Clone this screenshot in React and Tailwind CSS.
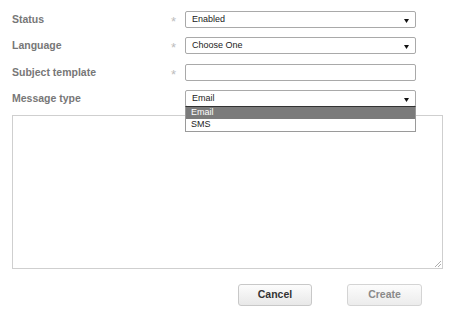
import React from 'react';

const Arrow = () => (
    <svg width="5" height="4" viewBox="0 0 5 4" className="absolute right-[6px] top-[7px]">
        <path d="M0 0 L5 0 L2.5 4 Z" fill="#111" />
    </svg>
);

const Star = ({ show }) => (
    <span className="w-[23px] h-[17px] text-center text-[13px] text-[#bdbdbd] leading-none pt-[4px]">{show ? '*' : ''}</span>
);

const Row = ({ label, required, children, className = '' }) => (
    <div className={`flex items-center ${className}`}>
        <label className="w-[150px] text-[10.5px] font-bold text-[#777]">{label}</label>
        <Star show={required} />
        {children}
    </div>
);

const SelectBox = ({ value, children }) => (
    <div className="relative w-[231px] h-[17px] border border-[#a9a9a9] rounded-[2px] bg-white">
        <span className="absolute left-[6px] top-[2px] text-[9px] text-[#222] leading-[11px]">{value}</span>
        <Arrow />
        {children}
    </div>
);

export default function App() {
    return (
        <div className="w-[474px] h-[319px] bg-white overflow-hidden" style={{ fontFamily: '"Liberation Sans", Arial, sans-serif' }}>
            <form className="px-3 pt-[11px]">
                <Row label="Status" required className="mb-[9px]">
                    <SelectBox value="Enabled" />
                </Row>
                <Row label="Language" required className="mb-[10px]">
                    <SelectBox value="Choose One" />
                </Row>
                <Row label="Subject template" required className="mb-[9px]">
                    <div className="w-[231px] h-[17px] border border-[#a9a9a9] rounded-[2px] bg-white" />
                </Row>
                <Row label="Message type" className="relative z-10">
                    <SelectBox value="Email">
                        <ul className="absolute left-[-1px] top-[15px] w-[231px] bg-white border border-[#9a9a9a] border-t-[#333] text-[9px] leading-[11px]">
                            <li className="bg-[#7b7b7b] text-white pl-[5px] h-[12px]">Email</li>
                            <li className="text-[#222] pl-[5px] h-[12px]">SMS</li>
                        </ul>
                    </SelectBox>
                </Row>
                <div className="relative mt-[8px] w-[431px] h-[154px] border border-[#cfcfcf] bg-white">
                    <svg width="6" height="6" viewBox="0 0 6 6" className="absolute right-[1px] bottom-[1px]">
                        <path d="M6 0 L0 6 M6 3 L3 6" stroke="#999" strokeWidth="0.8" />
                    </svg>
                </div>
                <div className="flex justify-end gap-[35px] pr-[40px] mt-[15px]">
                    <button type="button" className="w-[74px] h-[22px] rounded-[3px] border border-[#c8c8c8] bg-gradient-to-b from-[#fcfcfc] to-[#e8e8e8] text-[10.5px] font-bold text-[#333]">
                        Cancel
                    </button>
                    <button type="button" className="w-[75px] h-[22px] rounded-[3px] border border-[#d4d4d4] bg-gradient-to-b from-[#fcfcfc] to-[#ececec] text-[10.5px] font-bold text-[#8a8a8a]">
                        Create
                    </button>
                </div>
            </form>
        </div>
    );
}
